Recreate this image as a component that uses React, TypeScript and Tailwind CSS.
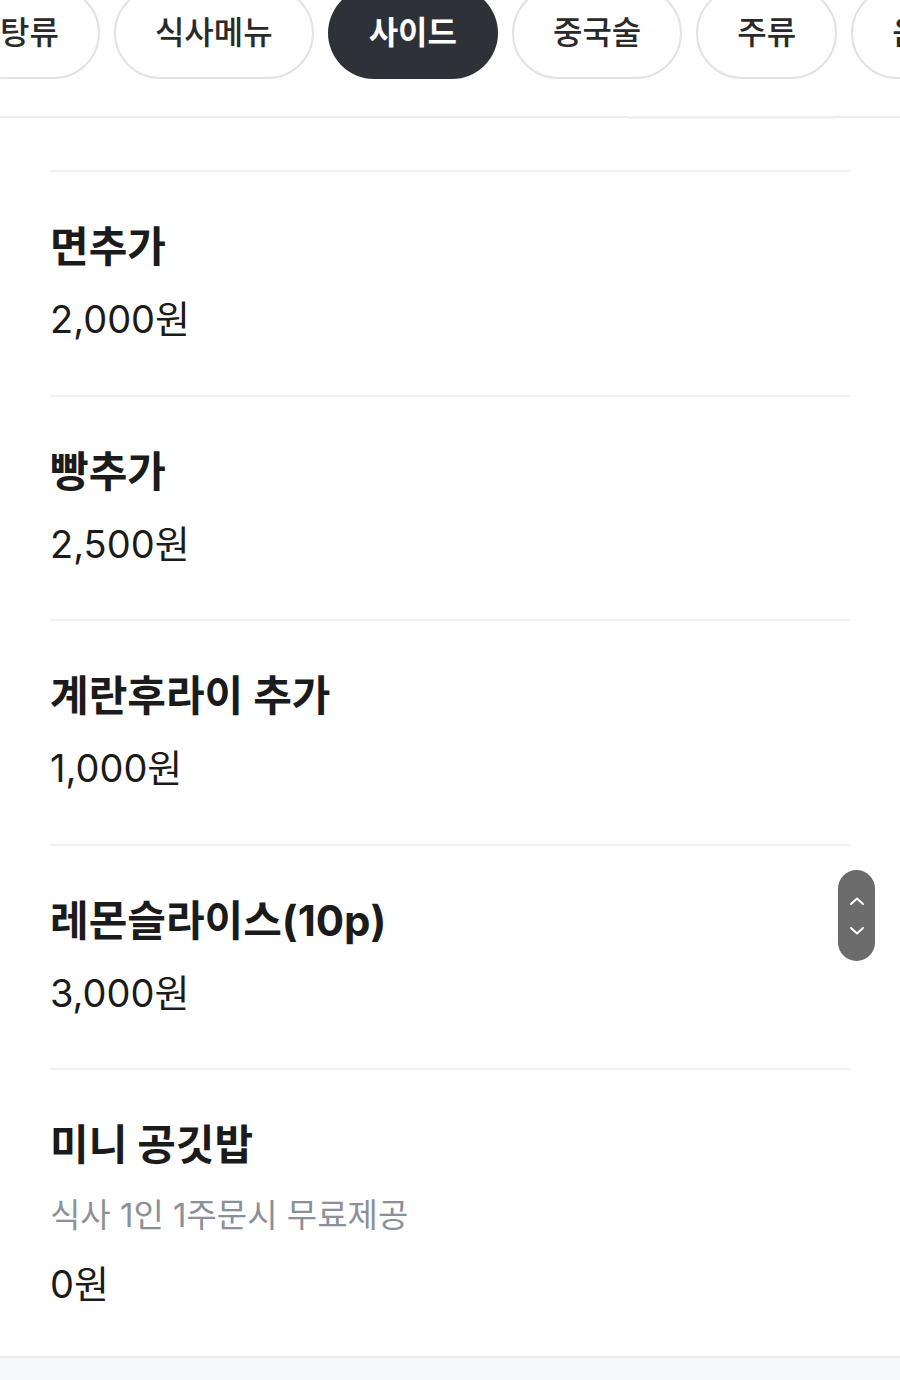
import React from "react";

const tabs = [
  { label: "탕류", active: false },
  { label: "식사메뉴", active: false },
  { label: "사이드", active: true },
  { label: "중국술", active: false },
  { label: "주류", active: false },
  { label: "음료", active: false },
];

const items = [
  { name: "면추가", price: "2,000원" },
  { name: "빵추가", price: "2,500원" },
  { name: "계란후라이 추가", price: "1,000원" },
  { name: "레몬슬라이스(10p)", price: "3,000원" },
  { name: "미니 공깃밥", desc: "식사 1인 1주문시 무료제공", price: "0원" },
];

export default function App() {
  return (
    <div
      className="relative w-[900px] h-[1380px] overflow-hidden bg-white text-[#1b1b1b] flex flex-col"
      style={{ fontFamily: 'Inter, "Noto Sans CJK KR", "Noto Sans", sans-serif' }}
    >
      {/* tab bar */}
      <div className="relative flex flex-col h-[118px] shrink-0 border-b-2 border-[#e9edf2]">
        <div className="flex gap-[14px] ml-[-41px] mt-[-13px] whitespace-nowrap">
          {tabs.map((t) => (
            <div
              key={t.label}
              className={
                t.active
                  ? "shrink-0 h-[92px] px-[41px] rounded-full bg-[#2e3137] text-white font-bold text-[32px] flex items-center"
                  : "shrink-0 h-[92px] px-[39px] rounded-full border-2 border-[#dfe4eb] bg-white text-[#2a2a2a] text-[32px] font-medium flex items-center"
              }
            >
              {t.label}
            </div>
          ))}
        </div>
        <div className="absolute left-[627px] top-[116px] w-[207px] h-[3px] rounded-full bg-[#eef1f6]" />
      </div>

      {/* list */}
      <div className="flex flex-col px-[50px] pt-[52px] flex-1">
        <div className="border-t-2 border-[#eef1f5]" />
        {items.map((it, i) => (
          <div
            key={it.name}
            className={
              "flex flex-col pt-[47px] " +
              (i < items.length - 1 ? "pb-[51.5px] border-b-2 border-[#eef1f5]" : "pb-[40px]")
            }
          >
            <div className="text-[42px] font-bold leading-[56px]">{it.name}</div>
            {it.desc && (
              <div className="mt-[20px] text-[33px] leading-[44px] text-[#8b9099]">{it.desc}</div>
            )}
            <div className={(it.desc ? "mt-[23px]" : "mt-[20px]") + " text-[38px] leading-[48px]"}>
              {it.price}
            </div>
          </div>
        ))}
      </div>

      {/* bottom gray section */}
      <div className="absolute left-0 right-0 top-[1356px] bottom-0 border-t-2 border-[#e8ebf0] bg-[#f7f8fa]" />

      {/* scroll button */}
      <div className="absolute left-[838px] top-[870px] w-[37px] h-[91px] rounded-full bg-[#6b6b6b] flex flex-col items-center justify-center gap-[20px]">
        <svg width="16" height="10" viewBox="0 0 16 10" fill="none">
          <path d="M2 8 L8 2.5 L14 8" stroke="white" strokeWidth="2" strokeLinecap="round" strokeLinejoin="round" />
        </svg>
        <svg width="16" height="10" viewBox="0 0 16 10" fill="none">
          <path d="M2 2 L8 7.5 L14 2" stroke="white" strokeWidth="2" strokeLinecap="round" strokeLinejoin="round" />
        </svg>
      </div>
    </div>
  );
}
